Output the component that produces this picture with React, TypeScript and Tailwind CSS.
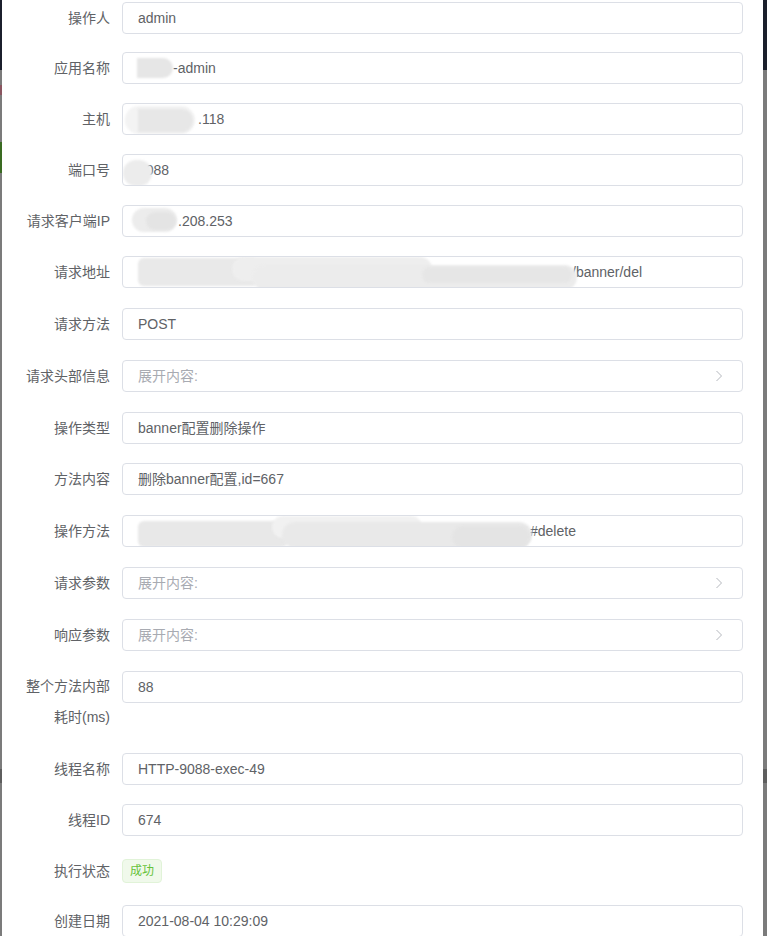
import React from "react";

type Blob = { l: number; w: number; t: number; h: number; c?: string; r?: string };
type Row = {
  label: string;
  mb: string;
  value?: string;
  placeholder?: string;
  spacer?: number;
  blobs?: Blob[];
  tall?: boolean;
  tag?: boolean;
};

const rows: Row[] = [
  { label: "操作人", mb: "mb-[18px]", value: "admin" },
  { label: "应用名称", mb: "mb-[19px]", value: "-admin", spacer: 35, blobs: [{ l: 14, w: 36, t: 5, h: 20, c: "#e6e6e6", r: "0 12px 12px 0" }] },
  {
    label: "主机",
    mb: "mb-[19px]",
    value: ".118",
    spacer: 60,
    blobs: [
      { l: 2, w: 70, t: 2, h: 28, c: "#f3f3f3", r: "14px" },
      { l: 15, w: 55, t: 5, h: 23, c: "#e7e7e7", r: "0 12px 12px 0" },
    ],
  },
  { label: "端口号", mb: "mb-[19px]", value: "9088", blobs: [{ l: 0, w: 29, t: 5, h: 26, c: "#ececec", r: "15px" }] },
  {
    label: "请求客户端IP",
    mb: "mb-[19px]",
    value: ".208.253",
    spacer: 40,
    blobs: [
      { l: 9, w: 45, t: 2, h: 24, c: "#ececec", r: "12px" },
      { l: 23, w: 30, t: 6, h: 18, c: "#e4e4e4", r: "10px" },
    ],
  },
  {
    label: "请求地址",
    mb: "mb-[20px]",
    value: "/banner/del",
    spacer: 434,
    blobs: [
      { l: 15, w: 120, t: 1, h: 28, c: "#e9e9e9", r: "6px" },
      { l: 109, w: 200, t: 0, h: 24, c: "#eeeeee", r: "14px" },
      { l: 129, w: 325, t: 8, h: 25, c: "#ececec", r: "14px" },
      { l: 299, w: 150, t: 10, h: 16, c: "#e6e6e6", r: "8px" },
    ],
  },
  { label: "请求方法", mb: "mb-[20px]", value: "POST" },
  { label: "请求头部信息", mb: "mb-[20px]", placeholder: "展开内容:" },
  { label: "操作类型", mb: "mb-[19px]", value: "banner配置删除操作" },
  { label: "方法内容", mb: "mb-[20px]", value: "删除banner配置,id=667" },
  {
    label: "操作方法",
    mb: "mb-[20px]",
    value: "#delete",
    spacer: 392,
    blobs: [
      { l: 15, w: 150, t: 5, h: 26, c: "#e8e8e8", r: "6px" },
      { l: 149, w: 150, t: 0, h: 22, c: "#f1f1f1", r: "12px" },
      { l: 159, w: 250, t: 6, h: 26, c: "#e9e9e9", r: "14px" },
      { l: 329, w: 78, t: 10, h: 22, c: "#e4e4e4", r: "12px" },
    ],
  },
  { label: "请求参数", mb: "mb-[20px]", placeholder: "展开内容:" },
  { label: "响应参数", mb: "mb-[20px]", placeholder: "展开内容:" },
  { label: "整个方法内部耗时(ms)", mb: "mb-[20px]", value: "88", tall: true },
  { label: "线程名称", mb: "mb-[19px]", value: "HTTP-9088-exec-49" },
  { label: "线程ID", mb: "mb-[19px]", value: "674" },
  { label: "执行状态", mb: "mb-[18px]", tag: true },
  { label: "创建日期", mb: "mb-[20px]", value: "2021-08-04 10:29:09" },
];

const font = { fontFamily: '"Liberation Sans", "Noto Sans CJK SC", Arial, sans-serif' };

function Chevron() {
  return (
    <svg width="8" height="12" viewBox="0 0 8 12" fill="none" className="shrink-0">
      <polyline points="1.5,1 6.5,6 1.5,11" stroke="#b4b7bd" strokeWidth="1" strokeLinejoin="miter" />
    </svg>
  );
}

function Field({ row }: { row: Row }) {
  if (row.tag) {
    return (
      <div className="flex h-[32px] items-center">
        <span className="inline-flex h-[24px] items-center rounded-[4px] border border-[#e1f3d8] bg-[#f0f9eb] px-[7px] text-[12px] leading-none text-[#67c23a]">
          成功
        </span>
      </div>
    );
  }
  return (
    <div className="relative flex h-[32px] items-center overflow-hidden rounded-[4px] border border-[#dcdfe6] bg-white pl-[15px] pr-[19px] text-[14px] leading-none">
      {row.blobs?.map((b, i) => (
        <div
          key={i}
          className="absolute z-10 blur-[1px]"
          style={{ left: b.l, width: b.w, top: b.t, height: b.h, background: b.c, borderRadius: b.r }}
        />
      ))}
      {row.spacer ? <span className="inline-block shrink-0" style={{ width: row.spacer }} /> : null}
      {row.placeholder ? (
        <>
          <span className="flex-1 text-[#a8abb2]">{row.placeholder}</span>
          <Chevron />
        </>
      ) : (
        <span className="whitespace-nowrap text-[#606266]">{row.value}</span>
      )}
    </div>
  );
}

export default function App() {
  return (
    <div className="flex h-[936px] w-full overflow-hidden bg-white" style={font}>
      {/* left overlay strip */}
      <div className="flex w-[2px] shrink-0 flex-col bg-[#7b7b7b]">
        <div className="h-[70px] bg-[#1b1f2c]" />
        <div className="mt-[15px] h-[10px] bg-[#8a5560]" />
        <div className="mt-[47px] h-[31px] bg-[#3a6b22]" />
        <div className="mt-[596px] h-[14px] bg-[#5e5e5e]" />
      </div>

      {/* dialog body */}
      <div className="flex-1 bg-white pl-[20px] pr-[20px] pt-[2px]">
        {rows.map((row, i) => (
          <div key={i} className={"flex " + row.mb}>
            <div
              className={
                row.tall
                  ? "h-[62px] w-[100px] shrink-0 overflow-visible pr-[12px] text-right text-[14px] leading-[31px] text-[#606266]"
                  : "h-[32px] w-[100px] shrink-0 overflow-hidden whitespace-nowrap pr-[12px] text-right text-[14px] leading-[32px] text-[#606266]"
              }
            >
              {row.label}
            </div>
            <div className="min-w-0 flex-1">
              <Field row={row} />
            </div>
          </div>
        ))}
      </div>

      {/* right overlay strip */}
      <div className="flex w-[4px] shrink-0 flex-col bg-[#7b7b7b]">
        <div className="h-[70px] bg-[#1b1f2c]" />
        <div className="mt-[699px] h-[14px] bg-[#5e5e5e]" />
      </div>
    </div>
  );
}
